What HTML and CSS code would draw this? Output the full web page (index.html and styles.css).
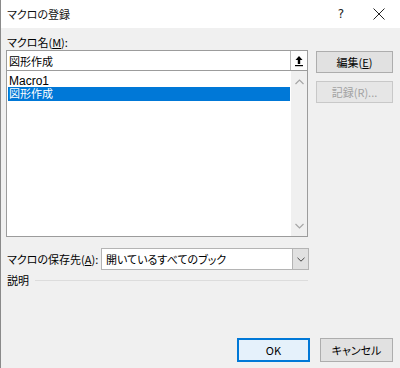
FILE: index.html
```html
<!DOCTYPE html>
<html lang="ja">
<head>
<meta charset="utf-8">
<link rel="stylesheet" href="styles.css">
</head>
<body>
<div class="dialog">
  <div class="titlebar">
    <span class="title">マクロの登録</span>
    <span class="help">?</span>
    <span class="close">
      <svg width="12" height="12" viewBox="0 0 12 12"><path d="M0.5 0.5L11.5 11.5M11.5 0.5L0.5 11.5" stroke="#222" stroke-width="1" fill="none"/></svg>
    </span>
  </div>
  <div class="content">
    <div class="label">マクロ名(<u>M</u>):</div>
    <div class="main">
      <div class="leftcol">
        <div class="namebox">
          <span class="nametext">図形作成</span>
          <span class="upbtn">
            <svg width="10" height="12" viewBox="0 0 10 12"><path d="M5 1L1.5 5H3.8V9H6.2V5H8.5Z" fill="#000"/><rect x="1" y="10" width="8" height="1.2" fill="#000"/></svg>
          </span>
        </div>
        <div class="listbox">
          <div class="items">
            <div class="item latin">Macro1</div>
            <div class="item selected">図形作成</div>
          </div>
          <div class="scrollbar">
            <svg width="9" height="6" viewBox="0 0 9 6"><path d="M0.5 5L4.5 1L8.5 5" stroke="#a6a6a6" stroke-width="1.2" fill="none"/></svg>
            <svg width="9" height="6" viewBox="0 0 9 6"><path d="M0.5 1L4.5 5L8.5 1" stroke="#a6a6a6" stroke-width="1.2" fill="none"/></svg>
          </div>
        </div>
      </div>
      <div class="rightcol">
        <div class="btn">編集(<u>E</u>)</div>
        <div class="btn disabled">記録(R)...</div>
      </div>
    </div>
    <div class="saverow">
      <span class="savelabel">マクロの保存先(<u>A</u>):</span>
      <div class="combo">
        <span class="combotext">開いているすべてのブック</span>
        <span class="dropbtn">
          <svg width="8" height="5" viewBox="0 0 8 5"><path d="M0.5 0.8L4 4.2L7.5 0.8" stroke="#444" stroke-width="1" fill="none"/></svg>
        </span>
      </div>
    </div>
    <div class="descrow">
      <span class="desclabel">説明</span>
      <span class="descline"></span>
    </div>
    <div class="footer">
      <div class="btn ok">OK</div>
      <div class="btn cancel">キャンセル</div>
    </div>
  </div>
</div>
</body>
</html>
```
FILE: styles.css
```css
html, body {
  margin: 0;
  padding: 0;
}
body {
  width: 400px;
  height: 368px;
  overflow: hidden;
  font-family: "Noto Sans CJK JP", "Noto Sans", sans-serif;
  font-size: 11px;
  font-feature-settings: "palt";
  color: #000;
}
.dialog {
  width: 400px;
  height: 368px;
  box-sizing: border-box;
  border-left: 1px solid #8a8a8a;
  background: #f0f0f0;
  display: flex;
  flex-direction: column;
}
.titlebar {
  height: 28px;
  background: #fff;
  display: flex;
  align-items: center;
  flex-shrink: 0;
}
.title {
  margin-left: 6px;
  font-size: 11px;
  line-height: 14px;
  color: #111;
}
.help {
  margin-left: auto;
  font-family: "DejaVu Sans", sans-serif;
  font-size: 12px;
  line-height: 14px;
  margin-right: 29px;
  color: #222;
}
.close {
  display: flex;
  margin-right: 15px;
}
.content {
  flex: 1;
  display: flex;
  flex-direction: column;
  padding: 7px 7px 6px 5px;
}
.label {
  line-height: 14px;
  padding-left: 1px;
  height: 15px;
}
u {
  text-decoration-thickness: 1px;
  text-underline-offset: 1px;
}
.main {
  display: flex;
  gap: 8px;
}
.leftcol {
  width: 302px;
  display: flex;
  flex-direction: column;
}
.namebox {
  height: 21px;
  box-sizing: border-box;
  border: 1px solid #9c9c9c;
  background: #fff;
  display: flex;
  align-items: center;
}
.nametext {
  padding-left: 2px;
  line-height: 14px;
  flex: 1;
}
.upbtn {
  width: 17px;
  height: 19px;
  box-sizing: border-box;
  border-left: 1px solid #b8b8b8;
  background: #fdfdfd;
  display: flex;
  align-items: center;
  justify-content: center;
}
.listbox {
  height: 166px;
  box-sizing: border-box;
  border: 1px solid #9c9c9c;
  border-top: none;
  background: #fff;
  display: flex;
}
.items {
  flex: 1;
  padding: 2px 1px 0 1px;
  font-family: "Liberation Sans", "Noto Sans CJK JP", sans-serif;
}
.item {
  height: 14px;
  line-height: 14px;
  padding-left: 1px;
  font-size: 11px;
}
.item.latin {
  font-size: 12px;
  height: 13px;
  line-height: 15px;
  padding-top: 1px;
}
.item.selected {
  background: #0078d7;
  color: #fff;
}
.scrollbar {
  width: 16px;
  background: #f0f0f0;
  display: flex;
  flex-direction: column;
  justify-content: space-between;
  align-items: center;
  padding: 8px 0 7px;
  box-sizing: border-box;
}
.rightcol {
  display: flex;
  flex-direction: column;
  gap: 8px;
  padding-top: 1px;
}
.btn {
  width: 77px;
  height: 22px;
  box-sizing: border-box;
  border: 1px solid #adadad;
  background: #e1e1e1;
  display: flex;
  align-items: center;
  justify-content: center;
  line-height: 14px;
}
.btn.disabled {
  color: #a2a2a2;
  border-color: #c8c8c8;
  background: #e6e6e6;
}
.saverow {
  display: flex;
  align-items: center;
  margin-top: 11px;
  height: 22px;
}
.savelabel {
  width: 94px;
  padding-left: 1px;
  line-height: 14px;
}
.combo {
  width: 208px;
  height: 22px;
  box-sizing: border-box;
  border: 1px solid #b4b4b4;
  background: #fff;
  display: flex;
  align-items: center;
}
.combotext {
  flex: 1;
  padding-left: 4px;
  line-height: 14px;
}
.dropbtn {
  width: 16px;
  height: 20px;
  box-sizing: border-box;
  border-left: 1px solid #b4b4b4;
  background: #e1e1e1;
  display: flex;
  align-items: center;
  justify-content: center;
}
.descrow {
  display: flex;
  align-items: center;
  width: 302px;
  margin-top: 3px;
  height: 14px;
}
.desclabel {
  padding-left: 1px;
  line-height: 14px;
}
.descline {
  flex: 1;
  height: 1px;
  background: #dcdcdc;
  margin-left: 6px;
}
.footer {
  margin-top: auto;
  display: flex;
  justify-content: flex-end;
  gap: 10px;
  padding-right: 0;
}
.btn.ok {
  width: 73px;
  height: 24px;
  border: 2px solid #0078d7;
  background: #e5f1fb;
}
.btn.cancel {
  width: 73px;
  height: 24px;
}
```
